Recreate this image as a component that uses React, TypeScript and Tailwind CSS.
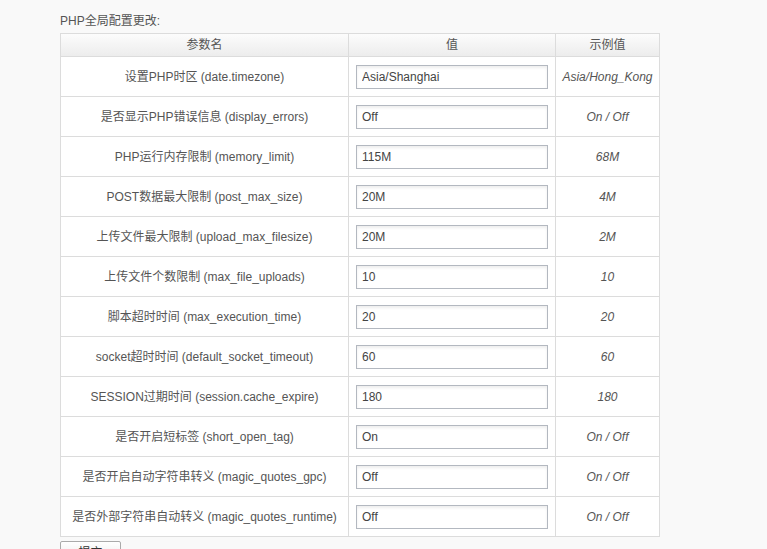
const rows: [string, string, string][] = [
  ["设置PHP时区 (date.timezone)", "Asia/Shanghai", "Asia/Hong_Kong"],
  ["是否显示PHP错误信息 (display_errors)", "Off", "On / Off"],
  ["PHP运行内存限制 (memory_limit)", "115M", "68M"],
  ["POST数据最大限制 (post_max_size)", "20M", "4M"],
  ["上传文件最大限制 (upload_max_filesize)", "20M", "2M"],
  ["上传文件个数限制 (max_file_uploads)", "10", "10"],
  ["脚本超时时间 (max_execution_time)", "20", "20"],
  ["socket超时时间 (default_socket_timeout)", "60", "60"],
  ["SESSION过期时间 (session.cache_expire)", "180", "180"],
  ["是否开启短标签 (short_open_tag)", "On", "On / Off"],
  ["是否开启自动字符串转义 (magic_quotes_gpc)", "Off", "On / Off"],
  ["是否外部字符串自动转义 (magic_quotes_runtime)", "Off", "On / Off"],
];

export default function App() {
  return (
    <div
      className="min-h-[549px] bg-[#f9f9f9] pl-[60px] pt-[12px] text-[12px] text-[#555]"
      style={{ fontFamily: '"Liberation Sans", Arial, "Noto Sans CJK SC", sans-serif' }}
    >
      <div className="h-[21px] leading-[18px]">PHP全局配置更改:</div>
      <table className="w-[600px] border-collapse border border-[#dcdcdc] bg-white">
        <thead>
          <tr className="h-[23px] bg-gradient-to-b from-[#fcfcfc] to-[#ececec]">
            <th className="w-[288px] border border-[#dcdcdc] font-normal">参数名</th>
            <th className="w-[207px] border border-[#dcdcdc] font-normal">值</th>
            <th className="border border-[#dcdcdc] font-normal">示例值</th>
          </tr>
        </thead>
        <tbody>
          {rows.map(([label, value, example]) => (
            <tr key={label} className="h-[40px]">
              <td className="border border-[#dcdcdc] text-center text-[#555]">{label}</td>
              <td className="border border-[#dcdcdc] pl-[7px]">
                <input
                  defaultValue={value}
                  className="block h-[24px] w-[192px] border border-[#b3b8c0] bg-white px-[5px] text-[12px] text-[#444] shadow-[inset_0_2px_3px_rgba(0,0,0,0.07)] outline-none"
                />
              </td>
              <td className="border border-[#dcdcdc] text-center italic text-[#555]">{example}</td>
            </tr>
          ))}
        </tbody>
      </table>
      <button className="mt-[4px] h-[24px] w-[61px] rounded-[2px] border border-[#aaa] bg-gradient-to-b from-white to-[#e6e6e6] text-[12px] text-[#333]">
        提交
      </button>
    </div>
  );
}
